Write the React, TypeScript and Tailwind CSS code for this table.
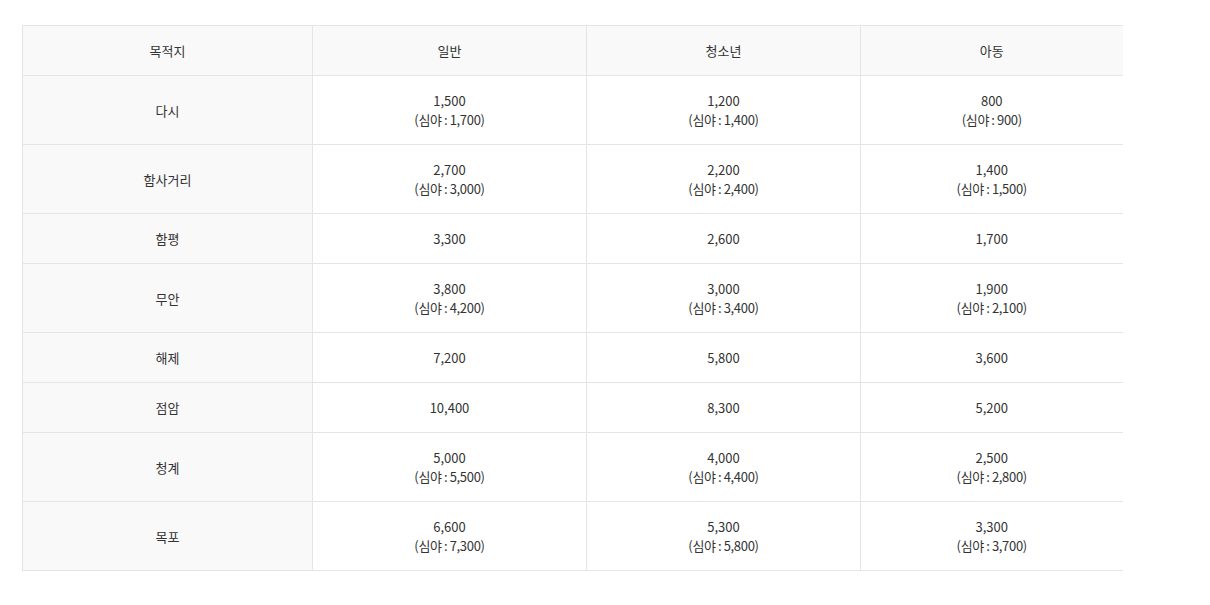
const rows = [
  { dest: "다시", adult: ["1,500", "1,700"], teen: ["1,200", "1,400"], child: ["800", "900"] },
  { dest: "함사거리", adult: ["2,700", "3,000"], teen: ["2,200", "2,400"], child: ["1,400", "1,500"] },
  { dest: "함평", adult: ["3,300"], teen: ["2,600"], child: ["1,700"] },
  { dest: "무안", adult: ["3,800", "4,200"], teen: ["3,000", "3,400"], child: ["1,900", "2,100"] },
  { dest: "해제", adult: ["7,200"], teen: ["5,800"], child: ["3,600"] },
  { dest: "점암", adult: ["10,400"], teen: ["8,300"], child: ["5,200"] },
  { dest: "청계", adult: ["5,000", "5,500"], teen: ["4,000", "4,400"], child: ["2,500", "2,800"] },
  { dest: "목포", adult: ["6,600", "7,300"], teen: ["5,300", "5,800"], child: ["3,300", "3,700"] },
];

const Fare = ({ v }: { v: string[] }) => (
  <>
    {v[0]}
    {v[1] && (
      <>
        <br />
        <span className="tracking-[-0.3px]">(심야{"\u2009:\u2009"}{v[1]})</span>
      </>
    )}
  </>
);

const cell = "border-b border-[#e5e5e5] py-[15px] text-center align-middle leading-[19px]";

export default function App() {
  return (
    <div
      className="min-h-[605px] bg-white pt-[25px] pl-[22px] text-[13px] text-[#333]"
      style={{ fontFamily: '"Noto Sans CJK KR", "Noto Sans", sans-serif' }}
    >
      <table className="w-[1100px] table-fixed border-collapse border-t border-[#e5e5e5]">
        <colgroup>
          <col className="w-[290px]" />
          <col className="w-[274px]" />
          <col className="w-[274px]" />
          <col className="w-[262px]" />
        </colgroup>
        <thead>
          <tr className="bg-[#f9f9f9]">
            <th className={`${cell} border-l border-r font-normal`}>목적지</th>
            <th className={`${cell} border-r font-normal`}>일반</th>
            <th className={`${cell} border-r font-normal`}>청소년</th>
            <th className={`${cell} font-normal`}>아동</th>
          </tr>
        </thead>
        <tbody>
          {rows.map((r) => (
            <tr key={r.dest}>
              <td className={`${cell} border-l border-r bg-[#f9f9f9]`}>{r.dest}</td>
              <td className={`${cell} border-r`}>
                <Fare v={r.adult} />
              </td>
              <td className={`${cell} border-r`}>
                <Fare v={r.teen} />
              </td>
              <td className={cell}>
                <Fare v={r.child} />
              </td>
            </tr>
          ))}
        </tbody>
      </table>
    </div>
  );
}
